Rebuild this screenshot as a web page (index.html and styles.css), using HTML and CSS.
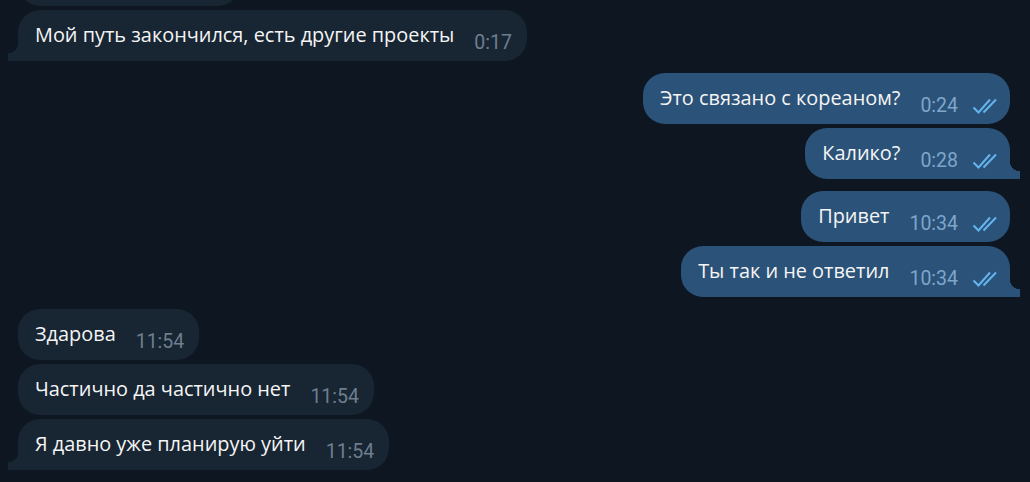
FILE: index.html
```html
<!DOCTYPE html>
<html>
<head>
  <meta charset="utf-8">
  <title>Chat</title>
  <link rel="stylesheet" href="styles.css">
</head>
<body>
  <div class="chat">
    <div class="row in"><div class="bubble cut"></div></div>

    <div class="row in tail">
      <div class="bubble"><span class="text">Мой путь закончился, есть другие проекты</span><span class="time">0:17</span></div>
    </div>

    <div class="row out group">
      <div class="bubble"><span class="text">Это связано с кореаном?</span><span class="time">0:24</span><svg class="check" viewBox="0 0 26 16"><path d="M1.5 9.5 L6.5 14.5 L18 1.5 M11.5 14.5 L24 1.5"/></svg></div>
    </div>
    <div class="row out tail">
      <div class="bubble"><span class="text">Калико?</span><span class="time">0:28</span><svg class="check" viewBox="0 0 26 16"><path d="M1.5 9.5 L6.5 14.5 L18 1.5 M11.5 14.5 L24 1.5"/></svg></div>
    </div>

    <div class="row out group">
      <div class="bubble"><span class="text">Привет</span><span class="time">10:34</span><svg class="check" viewBox="0 0 26 16"><path d="M1.5 9.5 L6.5 14.5 L18 1.5 M11.5 14.5 L24 1.5"/></svg></div>
    </div>
    <div class="row out tail">
      <div class="bubble"><span class="text">Ты так и не ответил</span><span class="time">10:34</span><svg class="check" viewBox="0 0 26 16"><path d="M1.5 9.5 L6.5 14.5 L18 1.5 M11.5 14.5 L24 1.5"/></svg></div>
    </div>

    <div class="row in group">
      <div class="bubble"><span class="text">Здарова</span><span class="time">11:54</span></div>
    </div>
    <div class="row in">
      <div class="bubble"><span class="text">Частично да частично нет</span><span class="time">11:54</span></div>
    </div>
    <div class="row in tail">
      <div class="bubble"><span class="text">Я давно уже планирую уйти</span><span class="time">11:54</span></div>
    </div>
  </div>
</body>
</html>
```

FILE: styles.css
```css
body {margin: 0;
      background-color: #0e1621;
      font-family: "Open Sans", sans-serif;
      overflow: hidden;}

.chat {display: flex;
       flex-direction: column;
       gap: 4px;
       padding: 0 20px 0 18px;
       margin-top: -45px;}

.row {display: flex;}

.row.out {justify-content: flex-end;}

.row.group {margin-top: 8px;}

.bubble {position: relative;
         display: flex;
         align-items: center;
         height: 51px;
         box-sizing: border-box;
         padding: 0 15px 0 17px;
         border-radius: 22px;
         color: #f5f5f5;
         font-size: 19.9px;}

.in .bubble {background-color: #182533;}

.out .bubble {background-color: #2b5278;
              padding-right: 12px;}

.cut {width: 222px;}

.text {white-space: nowrap;
       position: relative;
       top: -1px;}

.time {margin-left: 20px;
       position: relative;
       top: 7px;
       font-size: 19.5px;
       font-family: Roboto, sans-serif;
       color: #6d7f8f;}

.out .time {color: #7ea6cb;}

.check {width: 26px;
        height: 16px;
        margin-left: 14px;
        position: relative;
        top: 7px;
        fill: none;
        stroke: #64b5ef;
        stroke-width: 2;}

/* tails */
.in.tail .bubble {border-bottom-left-radius: 0;}

.out.tail .bubble {border-bottom-right-radius: 0;}

.in.tail .bubble::before {content: "";
                          position: absolute;
                          left: -10px;
                          bottom: 0;
                          width: 10px;
                          height: 18px;
                          background: radial-gradient(circle at 0 0, transparent 10px, #182533 10.5px);}

.out.tail .bubble::after {content: "";
                          position: absolute;
                          right: -10px;
                          bottom: 0;
                          width: 10px;
                          height: 18px;
                          background: radial-gradient(circle at 100% 0, transparent 10px, #2b5278 10.5px);}
```
